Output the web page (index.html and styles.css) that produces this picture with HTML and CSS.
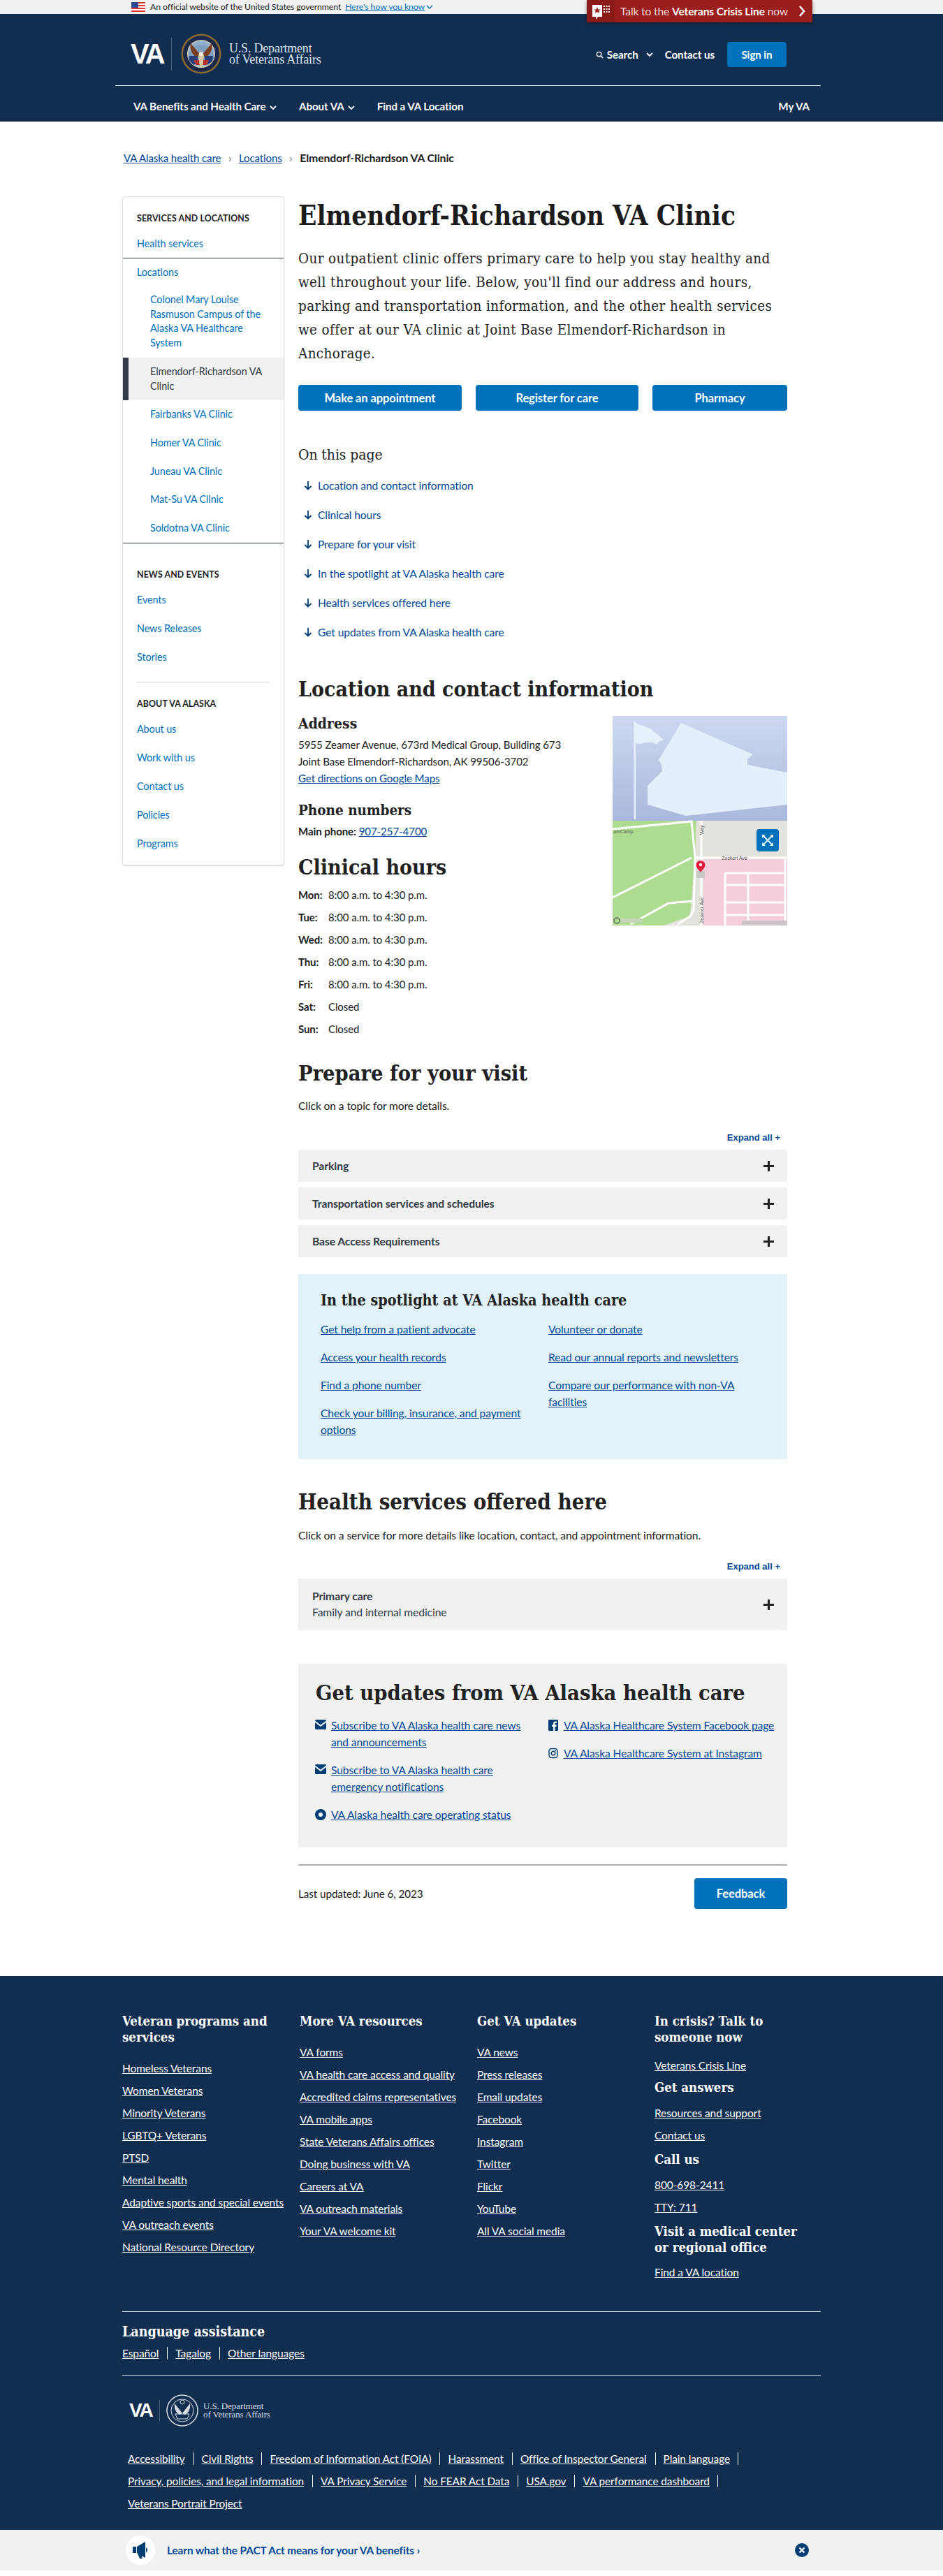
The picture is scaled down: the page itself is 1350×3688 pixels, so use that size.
FILE: index.html
```html
<!doctype html>
<html lang="en">

<head>
  <meta charset="utf-8">
  <title>Elmendorf-Richardson VA Clinic | VA Alaska health care</title>
  <link rel="stylesheet" href="styles.css">
</head>

<body>
  <div class="gov-banner">
    <div class="gov-inner">
      <svg class="flag" viewBox="0 0 20 14" width="20" height="14">
        <rect width="20" height="14" fill="#fff"/>
        <path d="M0 0h20v2H0zM0 4h20v2H0zM0 8h20v2H0zM0 12h20v2H0z" fill="#d83933"/>
        <rect width="10" height="8" fill="#2e4a8c"/>
      </svg>
      <span>An official website of the United States government</span>
      <a class="how-link" href="#">Here's how you know</a>
      <svg class="chev-small" viewBox="0 0 10 6" width="10" height="6"><path d="M1 1l4 4 4-4" fill="none" stroke="#0071bb" stroke-width="1.4"/></svg>
    </div>
  </div>

  <header class="site-header">
    <a class="crisis" href="#">
      <span class="crisis-icon">
        <svg viewBox="0 0 26 26" width="26" height="26">
          <path d="M1 4h14v17H9l-3 4v-4H1z" fill="#fff"/>
          <path d="M8 7l1.4 3.4H13l-2.8 2.2 1 3.4L8 14l-3.2 2 1-3.4L3 10.400h3.600z" fill="#9a1f1c"/>
          <path d="M17 5h2v2h-2zM20.500 5h2v2h-2zM24 5h2v2h-2zM17 9h2v2h-2zM20.500 9h2v2h-2zM24 9h2v2h-2zM17 13h2v2h-2zM20.500 13h2v2h-2zM24 13h2v2h-2z" fill="#fff"/>
        </svg>
      </span>
      <span class="crisis-text">Talk to the <b>Veterans Crisis Line</b> now</span>
      <svg class="crisis-chev" viewBox="0 0 10 18" width="10" height="18"><path d="M2 2l6 7-6 7" fill="none" stroke="#fff" stroke-width="2.600"/></svg>
    </a>

    <div class="header-top">
      <a class="logo" href="#">
        <span class="logo-va">VA</span>
        <span class="logo-rule"></span>
        <svg class="seal" viewBox="0 0 58 58" width="58" height="58">
          <circle cx="29" cy="29" r="28.500" fill="#8a6a2f"/>
          <circle cx="29" cy="29" r="26" fill="#1b2a4a"/>
          <circle cx="29" cy="29" r="20" fill="#e9d9b0"/>
          <circle cx="29" cy="29" r="19" fill="#8fb0cf"/>
          <path d="M10 36c2-14 9-20 19-20s17 6 19 20l-9 8H19z" fill="#7fa0c0"/>
          <path d="M29 32L14 14c-2 8 2 16 8 20zM29 32l15-18c2 8-2 16-8 20z" fill="#7a3f20"/>
          <path d="M12 32h12v10l-6 3-6-6z" fill="#27407a"/>
          <path d="M34 32h12l-1 8-6 4-5-3z" fill="#27407a"/>
          <path d="M18 38l22 0-3 7H22z" fill="#b5332c"/>
          <path d="M25 30h8l-2 18h-4z" fill="#d9c8a0"/>
          <circle cx="29" cy="29" r="3" fill="#f3efe2"/>
        </svg>
        <span class="logo-text">U.S. Department<br>of Veterans Affairs</span>
      </a>
      <div class="header-actions">
        <a class="search-link" href="#">
          <svg viewBox="0 0 12 12" width="11" height="11"><circle cx="5" cy="5" r="3.500" fill="none" stroke="#fff" stroke-width="1.500"/><path d="M7.500 7.500L11 11" stroke="#fff" stroke-width="1.600"/></svg>
          <span>Search</span>
          <svg class="search-chev" viewBox="0 0 10 7" width="10" height="7"><path d="M1 1l4 4 4-4" fill="none" stroke="#fff" stroke-width="1.800"/></svg>
        </a>
        <a class="contact-link" href="#">Contact us</a>
        <a class="sign-in" href="#">Sign in</a>
      </div>
    </div>

    <nav class="main-nav">
      <a class="nav-item" href="#">VA Benefits and Health Care
        <svg viewBox="0 0 10 7" width="10" height="7"><path d="M1 1l4 4 4-4" fill="none" stroke="#fff" stroke-width="1.800"/></svg></a>
      <a class="nav-item" href="#">About VA
        <svg viewBox="0 0 10 7" width="10" height="7"><path d="M1 1l4 4 4-4" fill="none" stroke="#fff" stroke-width="1.800"/></svg></a>
      <a class="nav-item" href="#">Find a VA Location</a>
      <a class="nav-item nav-right" href="#">My VA</a>
    </nav>
  </header>

  <div class="breadcrumbs">
    <a href="#">VA Alaska health care</a>
    <span class="crumb-sep">›</span>
    <a href="#">Locations</a>
    <span class="crumb-sep">›</span>
    <b>Elmendorf-Richardson VA Clinic</b>
  </div>

  <div class="page">
    <aside class="sidebar">
      <h4 class="side-title">SERVICES AND LOCATIONS</h4>
      <a class="side-link first-link" href="#">Health services</a>
      <div class="side-group">
        <a class="side-link parent-link" href="#">Locations</a>
        <a class="side-sub" href="#">Colonel Mary Louise Rasmuson Campus of the Alaska VA Healthcare System</a>
        <a class="side-sub current" href="#">Elmendorf-Richardson VA Clinic</a>
        <a class="side-sub" href="#">Fairbanks VA Clinic</a>
        <a class="side-sub" href="#">Homer VA Clinic</a>
        <a class="side-sub" href="#">Juneau VA Clinic</a>
        <a class="side-sub" href="#">Mat-Su VA Clinic</a>
        <a class="side-sub" href="#">Soldotna VA Clinic</a>
      </div>
      <h4 class="side-title news-title">NEWS AND EVENTS</h4>
      <a class="side-link first-link" href="#">Events</a>
      <a class="side-link" href="#">News Releases</a>
      <a class="side-link" href="#">Stories</a>
      <div class="side-rule"></div>
      <h4 class="side-title">ABOUT VA ALASKA</h4>
      <a class="side-link first-link" href="#">About us</a>
      <a class="side-link" href="#">Work with us</a>
      <a class="side-link" href="#">Contact us</a>
      <a class="side-link" href="#">Policies</a>
      <a class="side-link" href="#">Programs</a>
    </aside>

    <main class="content">
      <h1>Elmendorf-Richardson VA Clinic</h1>
      <p class="intro">Our outpatient clinic offers primary care to help you stay healthy and well throughout your life. Below, you'll find our address and hours, parking and transportation information, and the other health services we offer at our VA clinic at Joint Base Elmendorf-Richardson in Anchorage.</p>

      <div class="cta-row">
        <a class="btn btn-a" href="#">Make an appointment</a>
        <a class="btn btn-b" href="#">Register for care</a>
        <a class="btn btn-c" href="#">Pharmacy</a>
      </div>

      <div class="on-page">On this page</div>
      <ul class="jump-links">
        <li><svg viewBox="0 0 12 14" width="12" height="14"><path d="M6 1v11M1.500 8L6 12.500 10.500 8" fill="none" stroke="#003e73" stroke-width="1.800"/></svg><a href="#">Location and contact information</a></li>
        <li><svg viewBox="0 0 12 14" width="12" height="14"><path d="M6 1v11M1.500 8L6 12.500 10.500 8" fill="none" stroke="#003e73" stroke-width="1.800"/></svg><a href="#">Clinical hours</a></li>
        <li><svg viewBox="0 0 12 14" width="12" height="14"><path d="M6 1v11M1.500 8L6 12.500 10.500 8" fill="none" stroke="#003e73" stroke-width="1.800"/></svg><a href="#">Prepare for your visit</a></li>
        <li><svg viewBox="0 0 12 14" width="12" height="14"><path d="M6 1v11M1.500 8L6 12.500 10.500 8" fill="none" stroke="#003e73" stroke-width="1.800"/></svg><a href="#">In the spotlight at VA Alaska health care</a></li>
        <li><svg viewBox="0 0 12 14" width="12" height="14"><path d="M6 1v11M1.500 8L6 12.500 10.500 8" fill="none" stroke="#003e73" stroke-width="1.800"/></svg><a href="#">Health services offered here</a></li>
        <li><svg viewBox="0 0 12 14" width="12" height="14"><path d="M6 1v11M1.500 8L6 12.500 10.500 8" fill="none" stroke="#003e73" stroke-width="1.800"/></svg><a href="#">Get updates from VA Alaska health care</a></li>
      </ul>

      <h2 class="location-title">Location and contact information</h2>
      <div class="location">
        <div class="location-info">
          <h3 class="address-title">Address</h3>
          <div class="address-line address-first">5955 Zeamer Avenue, 673rd Medical Group, Building 673</div>
          <div class="address-line">Joint Base Elmendorf-Richardson, AK 99506-3702</div>
          <div class="address-line"><a href="#">Get directions on Google Maps</a></div>
          <h3 class="phone-title">Phone numbers</h3>
          <div class="address-line phone-line"><b>Main phone:</b> <a href="#">907-257-4700</a></div>
          <h2 class="hours-title">Clinical hours</h2>
          <div class="hours">
            <b>Mon:</b><span>8:00 a.m. to 4:30 p.m.</span>
            <b>Tue:</b><span>8:00 a.m. to 4:30 p.m.</span>
            <b>Wed:</b><span>8:00 a.m. to 4:30 p.m.</span>
            <b>Thu:</b><span>8:00 a.m. to 4:30 p.m.</span>
            <b>Fri:</b><span>8:00 a.m. to 4:30 p.m.</span>
            <b>Sat:</b><span>Closed</span>
            <b>Sun:</b><span>Closed</span>
          </div>
        </div>
        <svg class="map" viewBox="0 0 250 300" width="250" height="300">
          <defs>
            <linearGradient id="sky" x1="0" y1="0" x2="0" y2="1">
              <stop offset="0" stop-color="#cdd9f0"/>
              <stop offset="1" stop-color="#a9b9dc"/>
            </linearGradient>
          </defs>
          <rect width="250" height="150" fill="url(#sky)"/>
          <path d="M30.500 8h2.500v140h-2.500z" fill="#e6f0fb"/>
          <path d="M32 10l22 8 19 16-7 3-3 4-6-3-9 0-8 2-8-1z" fill="#e6f0fb"/>
          <path d="M98 10L201 55L193 62V70L250 81V127L105 143L50 127V100L71 79L70 70L66 63Z" fill="#e3effb"/>
          <rect y="150" width="250" height="150" fill="#e4e2dd"/>
          <path d="M0 150H120L118 203L112 275L110 287L73 300H0z" fill="#aedc90"/>
          <rect x="130" y="205" width="120" height="95" fill="#f4cfda"/>
          <g fill="none" stroke="#fff" stroke-width="3">
            <path d="M0 162L113 151L118 202L116 278L111 287L93 298"/>
            <path d="M127 150V300"/>
            <path d="M118 203H250"/>
            <path d="M0 260L113 203"/>
            <path d="M26 298L80 268L116 265"/>
            <path d="M161 225V300M194 225V300M161 225H245M161 242H245M161 267H245M161 285H245M247 205V300"/>
          </g>
          <path d="M120 222h12v10h-12z" fill="#c9c7c4"/>
          <path d="M126 207a6.500 6.500 0 0 1 6.500 6.500c0 4-6.500 10-6.500 10s-6.500-6-6.500-10a6.500 6.500 0 0 1 6.500-6.500z" fill="#e31c3d"/>
          <circle cx="126" cy="213" r="2.200" fill="#fff"/>
          <text x="1" y="168" class="map-label">amCamp</text>
          <text x="156" y="206" class="map-label">Zuckert Ave</text>
          <text class="map-label" transform="translate(130 297) rotate(-90)">Zeamer Ave</text>
          <text class="map-label" transform="translate(130 170) rotate(-90)">Way</text>
          <rect x="206" y="162" width="32" height="32" rx="4" fill="#0071bb"/>
          <path d="M216 172l12 12M228 172l-12 12" fill="none" stroke="#e4f2fb" stroke-width="2"/>
          <path d="M214 170h5l-5 5zM230 170h-5l5 5zM214 186h5l-5-5zM230 186h-5l5-5z" fill="#e4f2fb"/>
          <circle cx="6" cy="293" r="4" fill="none" stroke="#666" stroke-width="1.500"/>
          <rect x="12" y="290" width="30" height="6" fill="#c5d6b8"/>
          <rect x="185" y="293" width="65" height="7" fill="#ccc4c8"/>
        </svg>
      </div>

      <h2 class="prepare-title">Prepare for your visit</h2>
      <p class="helper">Click on a topic for more details.</p>
      <div class="expand-row"><a href="#">Expand all +</a></div>
      <div class="accordion">
        <div class="acc-item"><b>Parking</b><span class="plus"></span></div>
        <div class="acc-item"><b>Transportation services and schedules</b><span class="plus"></span></div>
        <div class="acc-item"><b>Base Access Requirements</b><span class="plus"></span></div>
      </div>

      <section class="spotlight">
        <h3>In the spotlight at VA Alaska health care</h3>
        <div class="spot-grid">
          <ul>
            <li><a href="#">Get help from a patient advocate</a></li>
            <li><a href="#">Access your health records</a></li>
            <li><a href="#">Find a phone number</a></li>
            <li><a href="#">Check your billing, insurance, and payment options</a></li>
          </ul>
          <ul>
            <li><a href="#">Volunteer or donate</a></li>
            <li><a href="#">Read our annual reports and newsletters</a></li>
            <li><a href="#">Compare our performance with non-VA facilities</a></li>
          </ul>
        </div>
      </section>

      <h2 class="services-title">Health services offered here</h2>
      <p class="helper helper-services">Click on a service for more details like location, contact, and appointment information.</p>
      <div class="expand-row expand-services"><a href="#">Expand all +</a></div>
      <div class="acc-item acc-tall">
        <div><b>Primary care</b><div>Family and internal medicine</div></div>
        <span class="plus"></span>
      </div>

      <section class="updates">
        <h2>Get updates from VA Alaska health care</h2>
        <div class="updates-grid">
          <div>
            <div class="update-link">
              <svg viewBox="0 0 16 14" width="16" height="14"><path d="M0 1.500A1.500 1.500 0 0 1 1.500 0h13A1.500 1.500 0 0 1 16 1.500L8 7.500z" fill="#003e73"/><path d="M0 4v8.500A1.500 1.500 0 0 0 1.500 14h13a1.500 1.500 0 0 0 1.500-1.500V4L8 10z" fill="#003e73"/></svg>
              <a href="#">Subscribe to VA Alaska health care news and announcements</a>
            </div>
            <div class="update-link">
              <svg viewBox="0 0 16 14" width="16" height="14"><path d="M0 1.500A1.500 1.500 0 0 1 1.500 0h13A1.500 1.500 0 0 1 16 1.500L8 7.500z" fill="#003e73"/><path d="M0 4v8.500A1.500 1.500 0 0 0 1.500 14h13a1.500 1.500 0 0 0 1.500-1.500V4L8 10z" fill="#003e73"/></svg>
              <a href="#">Subscribe to VA Alaska health care emergency notifications</a>
            </div>
            <div class="update-link">
              <svg viewBox="0 0 16 16" width="16" height="16"><circle cx="8" cy="8" r="8" fill="#003e73"/><circle cx="8" cy="8" r="3" fill="#fff"/></svg>
              <a href="#">VA Alaska health care operating status</a>
            </div>
          </div>
          <div>
            <div class="update-link">
              <svg class="social" viewBox="0 0 14 16" width="14" height="16"><rect width="14" height="16" rx="1.500" fill="#003e73"/><path d="M9.500 16v-6h2l.4-2.500H9.500V6c0-.8.300-1.200 1.200-1.200H12V2.700c-.5-.1-1.100-.2-1.800-.2-1.900 0-3.100 1.100-3.100 3.200v1.800H5V10h2.100v6z" fill="#fff"/></svg>
              <a href="#">VA Alaska Healthcare System Facebook page</a>
            </div>
            <div class="update-link">
              <svg class="social" viewBox="0 0 14 16" width="14" height="16"><rect x="1" y="1.500" width="12" height="13" rx="3.500" fill="none" stroke="#003e73" stroke-width="1.400"/><circle cx="7" cy="8" r="2.800" fill="none" stroke="#003e73" stroke-width="1.400"/><circle cx="10.300" cy="4.500" r=".9" fill="#003e73"/></svg>
              <a href="#">VA Alaska Healthcare System at Instagram</a>
            </div>
          </div>
        </div>
      </section>

      <div class="last-row">
        <span>Last updated: June 6, 2023</span>
        <a class="btn feedback" href="#">Feedback</a>
      </div>
    </main>
  </div>

  <footer class="site-footer">
    <div class="footer-cols">
      <div>
        <h4>Veteran programs and services</h4>
        <ul class="foot-list">
          <li><a href="#">Homeless Veterans</a></li>
          <li><a href="#">Women Veterans</a></li>
          <li><a href="#">Minority Veterans</a></li>
          <li><a href="#">LGBTQ+ Veterans</a></li>
          <li><a href="#">PTSD</a></li>
          <li><a href="#">Mental health</a></li>
          <li><a href="#">Adaptive sports and special events</a></li>
          <li><a href="#">VA outreach events</a></li>
          <li><a href="#">National Resource Directory</a></li>
        </ul>
      </div>
      <div>
        <h4>More VA resources</h4>
        <ul class="foot-list">
          <li><a href="#">VA forms</a></li>
          <li><a href="#">VA health care access and quality</a></li>
          <li><a href="#">Accredited claims representatives</a></li>
          <li><a href="#">VA mobile apps</a></li>
          <li><a href="#">State Veterans Affairs offices</a></li>
          <li><a href="#">Doing business with VA</a></li>
          <li><a href="#">Careers at VA</a></li>
          <li><a href="#">VA outreach materials</a></li>
          <li><a href="#">Your VA welcome kit</a></li>
        </ul>
      </div>
      <div>
        <h4>Get VA updates</h4>
        <ul class="foot-list">
          <li><a href="#">VA news</a></li>
          <li><a href="#">Press releases</a></li>
          <li><a href="#">Email updates</a></li>
          <li><a href="#">Facebook</a></li>
          <li><a href="#">Instagram</a></li>
          <li><a href="#">Twitter</a></li>
          <li><a href="#">Flickr</a></li>
          <li><a href="#">YouTube</a></li>
          <li><a href="#">All VA social media</a></li>
        </ul>
      </div>
      <div>
        <h4>In crisis? Talk to someone now</h4>
        <ul class="foot-list crisis-list">
          <li><a href="#">Veterans Crisis Line</a></li>
        </ul>
        <h4 class="answers">Get answers</h4>
        <ul class="foot-list tight">
          <li><a href="#">Resources and support</a></li>
          <li><a href="#">Contact us</a></li>
        </ul>
        <h4 class="call">Call us</h4>
        <ul class="foot-list tight">
          <li><a href="#">800-698-2411</a></li>
          <li><a href="#">TTY: 711</a></li>
        </ul>
        <h4 class="visit">Visit a medical center or regional office</h4>
        <ul class="foot-list tight find">
          <li><a href="#">Find a VA location</a></li>
        </ul>
      </div>
    </div>

    <div class="lang">
      <h4>Language assistance</h4>
      <div class="lang-links"><a href="#">Español</a><a href="#">Tagalog</a><a href="#">Other languages</a></div>
    </div>

    <div class="foot-logo">
      <span class="foot-va">VA</span>
      <span class="foot-rule"></span>
      <svg class="foot-seal" viewBox="0 0 46 46" width="46" height="46">
        <circle cx="23" cy="23" r="22" fill="#112e51" stroke="#d8dde4" stroke-width="1.500"/>
        <circle cx="23" cy="23" r="16" fill="none" stroke="#d8dde4" stroke-width="1"/>
        <path d="M23 27L12 13c-1 8 2 13 7 16zM23 27l11-14c1 8-2 13-7 16z" fill="#d8dde4"/>
        <path d="M13 28h20l-3 7H16z" fill="none" stroke="#d8dde4"/>
        <circle cx="23" cy="11" r="3" fill="none" stroke="#d8dde4"/>
      </svg>
      <span class="foot-text">U.S. Department<br>of Veterans Affairs</span>
    </div>

    <div class="legal">
      <div class="legal-line"><a href="#">Accessibility</a><a href="#">Civil Rights</a><a href="#">Freedom of Information Act (FOIA)</a><a href="#">Harassment</a><a href="#">Office of Inspector General</a><a href="#">Plain language</a></div>
      <div class="legal-line"><a href="#">Privacy, policies, and legal information</a><a href="#">VA Privacy Service</a><a href="#">No FEAR Act Data</a><a href="#">USA.gov</a><a href="#">VA performance dashboard</a></div>
      <div class="legal-line no-bar"><a href="#">Veterans Portrait Project</a></div>
    </div>
  </footer>

  <div class="promo">
    <span class="promo-badge">
      <svg viewBox="0 0 24 26" width="24" height="26">
        <path d="M1 8h5v9H1zM7 8l12-7v23L7 17z" fill="#003e73"/>
        <path d="M8 18h5l2 7h-4z" fill="#003e73"/>
        <path d="M20 9a4 4 0 0 1 0 7z" fill="#003e73"/>
      </svg>
    </span>
    <a class="promo-text" href="#">Learn what the PACT Act means for your VA benefits ›</a>
    <svg class="promo-close" viewBox="0 0 20 20" width="20" height="20">
      <circle cx="10" cy="10" r="10" fill="#003e73"/>
      <path d="M6.500 6.500l7 7M13.500 6.500l-7 7" stroke="#fff" stroke-width="2.400"/>
    </svg>
  </div>
</body>

</html>
```

FILE: styles.css
```css
* {
  box-sizing: border-box;
}

html, body {
  margin: 0;
  padding: 0;
}

body {
  font-family: "Lato", "Noto Sans", sans-serif;
  font-size: 15.6px;
  line-height: 24px;
  color: #212121;
  background: #fff;
  letter-spacing: -0.1px;
}

a {
  color: #004795;
}

h1, h2, h3, h4 {
  font-family: "DejaVu Serif Condensed", "DejaVu Serif", serif;
  font-weight: 700;
  margin: 0;
  letter-spacing: 0;
}

ul {
  list-style: none;
  margin: 0;
  padding: 0;
}

/* top banner */
.gov-banner {
  height: 20px;
  background: #f1f1f1;
}

.gov-inner {
  display: flex;
  align-items: center;
  height: 20px;
  padding-left: 188px;
  font-size: 12.3px;
  line-height: 20px;
  letter-spacing: -0.1px;
}

.flag {
  margin-right: 7px;
}

.how-link {
  margin-left: 6px;
  color: #0071bb;
}

.chev-small {
  margin-left: 2px;
}

/* header */
.site-header {
  position: relative;
  height: 154px;
  background: #112e51;
  border-bottom: 2px solid #0b2239;
  color: #fff;
}

.site-header a {
  color: #fff;
  text-decoration: none;
}

.crisis {
  position: absolute;
  top: -20px;
  left: 840px;
  width: 323px;
  height: 32px;
  display: flex;
  align-items: center;
  background: #9a1f1c;
  box-shadow: 0 2px 5px rgba(0, 0, 0, .4);
  font-size: 15.5px;
}

.crisis-icon {
  width: 40px;
  height: 32px;
  background: #8a1a18;
  display: flex;
  align-items: center;
  justify-content: center;
}

.crisis-text {
  margin-left: 8px;
  flex: 1;
  color: #f3d6d5;
}

.crisis-text b {
  color: #fff;
}

.crisis-chev {
  margin-right: 10px;
}

.header-top {
  display: flex;
  justify-content: space-between;
  align-items: center;
  height: 103px;
  margin: 0 175px 0 165px;
  padding: 0 49px 0 22px;
  border-bottom: 1px solid #d6e8f2;
}

.logo {
  display: flex;
  align-items: center;
  height: 58px;
  margin-top: 12px;
}

.logo-va {
  font-family: "Liberation Sans", sans-serif;
  font-size: 40px;
  font-weight: 700;
  letter-spacing: -3px;
  width: 58px;
}

.logo-rule {
  width: 1px;
  height: 47px;
  background: #49607c;
  margin-right: 13px;
}

.logo-text {
  margin-left: 11px;
  font-family: "Liberation Serif", serif;
  font-size: 18px;
  line-height: 16px;
  letter-spacing: -0.2px;
  color: #dbe7f2;
}

.header-actions {
  display: flex;
  align-items: center;
  padding-top: 14px;
  font-weight: 700;
  font-size: 15.2px;
}

.search-link {
  display: flex;
  align-items: center;
}

.search-link span {
  margin-left: 5px;
}

.search-chev {
  margin: 0 17px 0 11px;
}

.sign-in {
  margin-left: 18px;
  width: 85px;
  height: 36px;
  background: #0071bb;
  border-radius: 4px;
  display: flex;
  align-items: center;
  justify-content: center;
}

.main-nav {
  display: flex;
  align-items: center;
  height: 49px;
  margin: 0 175px 0 191px;
  padding-top: 9px;
  font-weight: 700;
  font-size: 15.2px;
}

.nav-item {
  margin-right: 32px;
}

.nav-item svg {
  margin-left: 2px;
}

.nav-right {
  margin-left: auto;
  margin-right: 16px;
}

/* breadcrumbs */
.breadcrumbs {
  padding: 40px 0 0 177px;
  height: 107px;
  font-size: 15px;
}

.breadcrumbs b {
  font-size: 15.8px;
}

.crumb-sep {
  margin: 0 7px;
  color: #5b616b;
}

.page {
  display: flex;
  align-items: flex-start;
  padding-left: 175px;
  gap: 20px;
}

/* sidebar */
.sidebar {
  width: 232px;
  height: 958px;
  padding-top: 20px;
  border: 1px solid #ddd;
  border-radius: 4px;
  box-shadow: 0 1px 2px rgba(0, 0, 0, .15);
}

.side-title {
  font-family: "Lato", sans-serif;
  font-size: 12.4px;
  line-height: 22px;
  padding-left: 20px;
  letter-spacing: .1px;
  color: #212121;
}

.side-link {
  display: block;
  padding-left: 20px;
  font-size: 14.4px;
  line-height: 41px;
  color: #0071bb;
  text-decoration: none;
}

.first-link {
  margin-top: 4px;
}

.parent-link {
  line-height: 39px;
}

.side-group {
  border-top: 1px solid #323a45;
  border-bottom: 1px solid #323a45;
}

.side-sub {
  display: block;
  padding: 10px 18px 10px 39px;
  font-size: 14.4px;
  line-height: 20.700px;
  color: #0071bb;
  text-decoration: none;
}

.current {
  background: #f1f1f1;
  color: #323a45;
  border-left: 8px solid #323a45;
  padding-left: 31px;
}

.news-title {
  margin-top: 34px;
}

.side-rule {
  height: 1px;
  margin: 15px 20px 20px;
  background: #d6d7d9;
}

/* main column */
.content {
  width: 700px;
  padding-bottom: 96px;
}

h1 {
  font-size: 38.5px;
  line-height: 56px;
  color: #1b1b1b;
}

.intro {
  margin: 16px 0 0;
  font-family: "DejaVu Serif Condensed", "DejaVu Serif", serif;
  font-size: 20.4px;
  line-height: 34px;
  letter-spacing: .4px;
}

.cta-row {
  display: flex;
  gap: 20px;
  margin-top: 28px;
}

.btn {
  display: flex;
  align-items: center;
  justify-content: center;
  height: 37px;
  background: #0071bb;
  border-radius: 4px;
  color: #fff;
  font-weight: 700;
  font-size: 16.5px;
  text-decoration: none;
}

.btn-a {
  width: 234px;
}

.btn-b {
  width: 233px;
}

.btn-c {
  width: 193px;
}

.on-page {
  margin-top: 48px;
  font-family: "DejaVu Serif Condensed", "DejaVu Serif", serif;
  font-size: 21px;
  line-height: 30px;
}

.jump-links {
  margin-top: 8px;
}

.jump-links li {
  display: flex;
  align-items: center;
  height: 42px;
  padding-left: 8px;
}

.jump-links a {
  margin-left: 8px;
  text-decoration: none;
}

.location-title {
  margin-top: 41px;
  font-size: 30px;
  line-height: 40px;
}

.location {
  display: flex;
  justify-content: space-between;
  margin-top: 16px;
}

.address-title {
  font-size: 21px;
  line-height: 26px;
}

.address-line {
  font-size: 15.1px;
  line-height: 24px;
}

.address-first {
  margin-top: 5px;
}

.phone-title {
  margin-top: 20px;
  font-size: 20.5px;
  line-height: 28px;
}

.phone-line {
  margin-top: 4px;
}

.hours-title {
  margin-top: 20px;
  font-size: 30px;
  line-height: 40px;
}

.hours {
  display: grid;
  grid-template-columns: 43px auto;
  grid-auto-rows: 32px;
  align-items: center;
  justify-content: start;
  margin-top: 3px;
  font-size: 15px;
}

.map {
  display: block;
  flex-shrink: 0;
  margin-top: 2px;
}

.map-label {
  font-family: "Liberation Sans", sans-serif;
  font-size: 7px;
  letter-spacing: 0;
  fill: #555;
}

.prepare-title {
  margin-top: 27px;
  font-size: 30.5px;
  line-height: 40px;
}

.helper {
  margin: 15px 0 0;
}

.helper-services {
  margin-top: 16px;
}

.expand-row {
  display: flex;
  justify-content: flex-end;
  padding-right: 10px;
  margin-top: 25px;
  height: 17px;
  line-height: 17px;
}

.expand-services {
  margin-top: 24px;
}

.expand-row a {
  font-family: "Liberation Sans", sans-serif;
  font-weight: 700;
  font-size: 13px;
  letter-spacing: 0;
  text-decoration: none;
}

.accordion {
  margin-top: 9px;
}

.acc-item {
  display: flex;
  align-items: center;
  justify-content: space-between;
  height: 46px;
  margin-bottom: 8px;
  padding: 0 19px 0 20px;
  background: #f1f1f1;
  font-size: 15.7px;
  color: #323a45;
}

.acc-tall {
  height: 74px;
  margin-top: 9px;
  margin-bottom: 0;
  line-height: 23px;
}

.plus {
  position: relative;
  width: 15px;
  height: 15px;
}

.plus::before,
.plus::after {
  content: "";
  position: absolute;
  background: #212121;
}

.plus::before {
  left: 0;
  right: 0;
  top: 6px;
  height: 3px;
}

.plus::after {
  top: 0;
  bottom: 0;
  left: 6px;
  width: 3px;
}

.spotlight {
  margin-top: 24px;
  height: 265px;
  padding: 22px 32px;
  background: #e1f3f8;
}

.spotlight h3 {
  font-size: 21.4px;
  line-height: 32px;
  color: #212121;
}

.spot-grid {
  display: grid;
  grid-template-columns: 326px 1fr;
  margin-top: 13px;
}

.spot-grid li {
  margin-bottom: 16px;
}

.services-title {
  margin-top: 41px;
  font-size: 31px;
  line-height: 40px;
}

.updates {
  margin-top: 48px;
  height: 263px;
  padding: 20px 25px;
  background: #f1f1f1;
}

.updates h2 {
  font-size: 30.6px;
  line-height: 42px;
}

.updates-grid {
  display: grid;
  grid-template-columns: 333px 1fr;
  margin-top: 14px;
}

.update-link {
  display: flex;
  align-items: flex-start;
  margin-bottom: 16px;
}

.update-link a {
  max-width: 278px;
}

.update-link .social ~ a {
  max-width: none;
  white-space: nowrap;
}

.update-link svg {
  flex-shrink: 0;
  margin: 4px 7px 0 -1px;
}

.update-link .social {
  margin: 4px 8px 0 0;
}

.last-row {
  display: flex;
  justify-content: space-between;
  align-items: center;
  margin-top: 24px;
  padding-top: 18px;
  border-top: 2px solid #aeb0b5;
  font-size: 15.3px;
}

.feedback {
  width: 133px;
  height: 44px;
}

/* footer */
.site-footer {
  height: 793px;
  padding: 53px 175px 0;
  background: #112e51;
  color: #fff;
  font-size: 15.5px;
}

.site-footer a {
  color: #fff;
}

.site-footer h4 {
  font-size: 18.5px;
  line-height: 23px;
}

.footer-cols {
  display: grid;
  grid-template-columns: repeat(3, 254px) 238px;
  height: 428px;
  border-bottom: 1px solid #d6e8f2;
}

.footer-cols > div {
  padding-right: 16px;
}

.foot-list {
  margin-top: 21px;
}

.foot-list li {
  line-height: 24px;
  margin-bottom: 8px;
  white-space: nowrap;
}

.site-footer .crisis-list {
  margin-top: 17px;
}

.site-footer .answers {
  margin-top: 7px;
}

.site-footer .tight {
  margin-top: 13px;
}

.site-footer .call {
  margin-top: 11px;
}

.site-footer .visit {
  margin-top: 11px;
}

.site-footer .find {
  margin-top: 12px;
}

.lang {
  height: 91px;
  padding-top: 17px;
  border-bottom: 1px solid #d6e8f2;
}

.site-footer .lang h4 {
  font-size: 19.5px;
}

.lang-links {
  margin-top: 7px;
}

.lang-links a + a,
.legal-line a + a {
  position: relative;
  margin-left: 24px;
}

.lang-links a + a::before,
.legal-line a + a::before {
  content: "";
  position: absolute;
  left: -12px;
  top: 0;
  bottom: 0;
  width: 1px;
  background: #fff;
}

.foot-logo {
  display: flex;
  align-items: center;
  height: 46px;
  margin: 27px 0 0 10px;
}

.foot-va {
  font-family: "Liberation Sans", sans-serif;
  font-size: 28px;
  font-weight: 700;
  letter-spacing: -2px;
  width: 43px;
}

.foot-rule {
  width: 1px;
  height: 30px;
  background: #49607c;
  margin-right: 9px;
}

.foot-text {
  margin-left: 7px;
  font-family: "Liberation Serif", serif;
  font-size: 13px;
  line-height: 12px;
  letter-spacing: -0.1px;
  color: #d8dde4;
}

.legal {
  margin: 30px 0 0 8px;
  font-size: 15.4px;
}

.legal-line {
  line-height: 32px;
}

.legal-line a:last-child {
  position: relative;
}

.legal-line a:last-child::after {
  content: "";
  position: absolute;
  right: -12px;
  top: 0;
  bottom: 0;
  width: 1px;
  background: #fff;
}

.no-bar a:last-child::after {
  display: none;
}

/* bottom promo */
.promo {
  display: flex;
  align-items: center;
  height: 58px;
  padding: 0 192px 0 180px;
  background: #f1f1f1;
}

.promo-badge {
  width: 42px;
  height: 42px;
  border-radius: 50%;
  background: #fff;
  display: flex;
  align-items: center;
  justify-content: center;
}

.promo-text {
  margin-left: 17px;
  flex: 1;
  font-weight: 700;
  font-size: 15.4px;
  text-decoration: none;
}
```
